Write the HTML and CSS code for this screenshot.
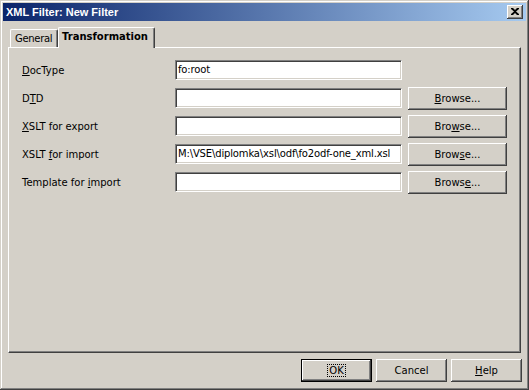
FILE: index.html
```html
<!DOCTYPE html>
<html>
<head>
<meta charset="utf-8">
<link rel="stylesheet" href="styles.css">
</head>
<body>
<div class="window">
  <div class="titlebar">
    <span class="title">XML Filter: New Filter</span>
    <div class="close">
      <svg width="8" height="7" viewBox="0 0 8 7"><path d="M0 0h2l2 2 2-2h2v1L5 3.5 8 6v1H6L4 5 2 7H0V6l3-2.5L0 1z" fill="#000"/></svg>
    </div>
  </div>
  <div class="body">
    <div class="tabs">
      <div class="tab">General</div>
      <div class="tab active">Transformation</div>
    </div>
    <div class="panel">
      <div class="row">
        <label class="lbl"><u>D</u>ocType</label>
        <div class="field">fo:root</div>
      </div>
      <div class="row">
        <label class="lbl">D<u>T</u>D</label>
        <div class="field"></div>
        <div class="btn browse"><u>B</u>rowse...</div>
      </div>
      <div class="row">
        <label class="lbl"><u>X</u>SLT for export</label>
        <div class="field"></div>
        <div class="btn browse">Bro<u>w</u>se...</div>
      </div>
      <div class="row">
        <label class="lbl">XSLT <u>f</u>or import</label>
        <div class="field">M:\VSE\diplomka\xsl\odf\fo2odf-one_xml.xsl</div>
        <div class="btn browse">Brow<u>s</u>e...</div>
      </div>
      <div class="row">
        <label class="lbl">Template for <u>i</u>mport</label>
        <div class="field"></div>
        <div class="btn browse">Brows<u>e</u>...</div>
      </div>
    </div>
    <div class="footer">
      <div class="btn default"><span class="focus">OK</span></div>
      <div class="btn">Cancel</div>
      <div class="btn"><u>H</u>elp</div>
    </div>
  </div>
</div>
</body>
</html>
```
FILE: styles.css
```css
html, body {
  margin: 0;
  padding: 0;
  background: #d4d0c8;
}
.window {
  width: 529px;
  height: 390px;
  box-sizing: border-box;
  padding: 3px;
  background: #d4d0c8;
  box-shadow: inset -1px -1px #404040, inset 1px 1px #d4d0c8, inset -2px -2px #808080, inset 2px 2px #fff;
  font-family: "DejaVu Sans", sans-serif;
  font-size: 10px;
  color: #000;
  display: flex;
  flex-direction: column;
}
.titlebar {
  height: 18px;
  background: linear-gradient(to right, #0a246a, #a6caf0);
  display: flex;
  align-items: center;
  justify-content: space-between;
  padding: 0 3px 0 3px;
}
.title {
  color: #fff;
  font-family: "Liberation Sans", Arial, sans-serif;
  font-weight: bold;
  font-size: 11px;
}
.close {
  width: 16px;
  height: 14px;
  box-sizing: border-box;
  background: #d4d0c8;
  box-shadow: inset -1px -1px #404040, inset 1px 1px #fff, inset -2px -2px #808080;
  display: flex;
  align-items: center;
  justify-content: center;
  padding: 0 1px 1px 0;
}
.close svg { display: block; }
.body {
  flex: 1;
  display: flex;
  flex-direction: column;
  padding: 0 5px 5px 5px;
}
.tabs {
  height: 26px;
  display: flex;
  align-items: flex-end;
  padding-left: 2px;
  position: relative;
  z-index: 1;
}
.tab {
  height: 18px;
  box-sizing: border-box;
  padding: 3px 0 0 4px;
  border-top: 1px solid #fff;
  border-left: 1px solid #fff;
  border-right: 1px solid #404040;
  border-radius: 2px 2px 0 0;
  box-shadow: inset -1px 0 #808080;
  width: 48px;
  white-space: nowrap;
  letter-spacing: -0.3px;
}
.tab.active {
  height: 21px;
  width: 97px;
  margin-bottom: -1px;
  font-weight: bold;
  padding: 3px 4px 0 3px;
  letter-spacing: 0;
  background: #d4d0c8;
}
.panel {
  height: 306px;
  box-sizing: border-box;
  border-top: 1px solid #fff;
  border-left: 1px solid #fff;
  border-right: 1px solid #404040;
  border-bottom: 1px solid #404040;
  box-shadow: inset -1px -1px #808080;
  padding: 8px 0 0 13px;
  display: flex;
  flex-direction: column;
}
.row {
  height: 28px;
  display: flex;
  align-items: center;
}
.lbl {
  width: 153px;
  flex: none;
}
.field {
  width: 227px;
  height: 20px;
  box-sizing: border-box;
  background: #fff;
  border-top: 1px solid #808080;
  border-left: 1px solid #808080;
  border-bottom: 1px solid #fff;
  border-right: 1px solid #fff;
  box-shadow: inset 1px 1px #404040, inset -1px -1px #d4d0c8;
  padding: 3px 0 0 2px;
  white-space: nowrap;
  overflow: hidden;
  letter-spacing: -0.15px;
  flex: none;
}
.btn {
  width: 71px;
  height: 23px;
  box-sizing: border-box;
  background: #d4d0c8;
  box-shadow: inset -1px -1px #404040, inset 1px 1px #fff, inset -2px -2px #808080;
  display: flex;
  align-items: center;
  justify-content: center;
  flex: none;
}
.browse {
  width: 99px;
  margin-left: 6px;
}
.footer {
  display: flex;
  justify-content: flex-end;
  gap: 4px;
  margin-top: 6px;
  margin-right: -1px;
}
.btn.default {
  box-shadow: inset 0 0 0 1px #000, inset -2px -2px #404040, inset 2px 2px #fff, inset -3px -3px #808080;
}
.focus {
  outline: 1px dotted #000;
  padding: 0 1px;
}
```
